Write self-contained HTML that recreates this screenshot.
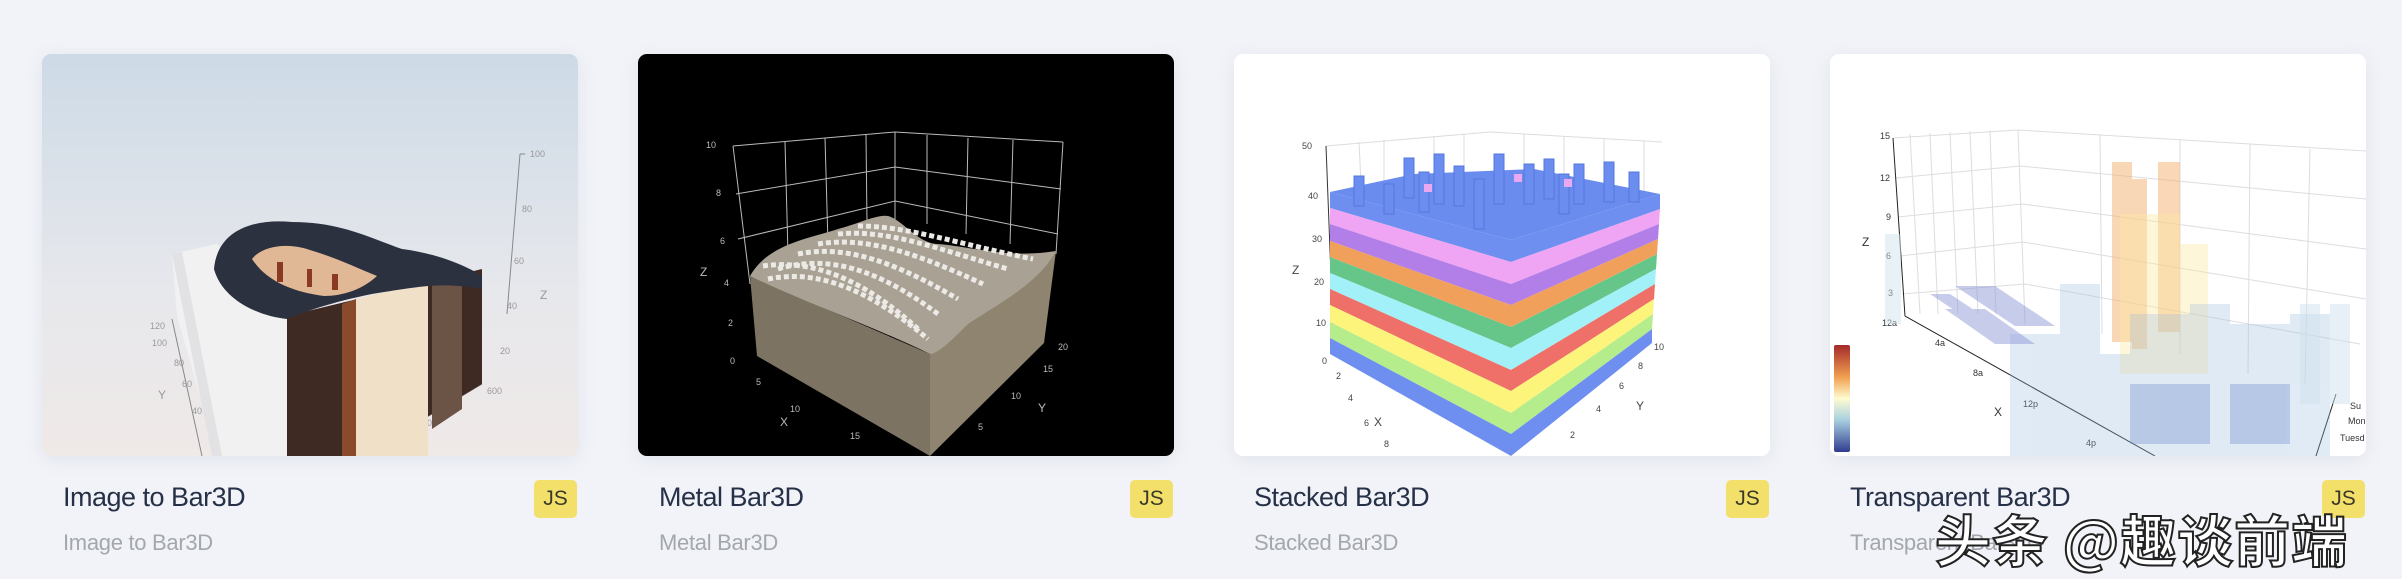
<!DOCTYPE html>
<html><head><meta charset="utf-8"><style>
*{margin:0;padding:0;box-sizing:border-box}
body{width:2402px;height:578px;background:#f1f3f8;position:relative;overflow:hidden;font-family:"Liberation Sans","Noto Sans CJK SC",sans-serif}
.card{position:absolute;top:54px;width:536px;height:402px;border-radius:9px;overflow:hidden;box-shadow:0 4px 18px rgba(120,130,160,.12)}
.card svg{display:block}
.t{position:absolute;top:482px;font-size:27px;color:#263147;letter-spacing:-0.5px}
.s{position:absolute;top:530px;font-size:22px;color:#a3a7ae;letter-spacing:-0.3px}
.js{position:absolute;top:480px;width:43px;height:38px;border-radius:5px;background:#f3e06a;color:#3b3a2a;font-size:21px;text-align:center;line-height:38px}
.wm{position:absolute;left:1935px;top:498px;font-size:56px;font-weight:bold;color:#fff;font-family:"Noto Sans CJK SC","WenQuanYi Zen Hei",sans-serif;-webkit-text-stroke:2px #222;letter-spacing:1px;white-space:nowrap}
</style></head><body>

<div class="card" style="left:42px;background:linear-gradient(#cddae6,#e7e8ec 60%,#efe9e7)">
<svg width="536" height="402" viewBox="0 0 536 402">
<g stroke="#888" stroke-width="1" fill="none"><path d="M465 260 L478 100 M478 100 L483 100"/><path d="M130 265 L160 402"/><path d="M440 330 L320 402"/></g>
<g font-size="9" fill="#999"><text x="488" y="103">100</text><text x="480" y="158">80</text><text x="472" y="210">60</text><text x="465" y="255">40</text><text x="458" y="300">20</text><text x="445" y="340">600</text><text x="108" y="275">120</text><text x="110" y="292">100</text><text x="132" y="312">80</text><text x="140" y="333">60</text><text x="150" y="360">40</text><text x="168" y="390">20</text><text x="395" y="355">80</text><text x="380" y="372">60</text><text x="370" y="393">40</text></g>
<text x="116" y="345" font-size="12" fill="#999">Y</text><text x="498" y="245" font-size="12" fill="#999">Z</text>
<polygon points="130,200 175,190 245,262 245,402 218,402 175,402 135,262" fill="#f2f1f1"/>
<polygon points="130,200 140,198 180,402 170,402" fill="#e2e2e4"/>
<polygon points="245,262 440,215 440,330 320,402 245,402" fill="#3e2a22"/>
<polygon points="314,245 386,228 386,402 314,402" fill="#f1e0c8"/>
<polygon points="300,250 314,245 314,402 300,402" fill="#8a4a2c"/>
<polygon points="390,228 420,220 420,355 390,375" fill="#6b5345"/>
<path d="M172,215 C175,180 205,164 250,168 C300,168 330,185 360,195 C400,200 430,215 440,222 L440,235 C400,228 380,232 330,240 C290,248 262,258 245,265 C215,262 180,245 172,215 Z" fill="#2c3140"/>
<path d="M210,205 C220,192 245,188 268,196 C295,204 315,214 335,222 C320,236 300,242 282,242 C252,238 225,228 210,205 Z" fill="#e0b896"/>
<path d="M235,208 l6,0 0,20 -6,0z M265,215 l5,0 0,18 -5,0z M290,220 l6,0 0,16 -6,0z" fill="#8a3a22"/>
</svg></div>
<div class="t" style="left:63px">Image to Bar3D</div><div class="s" style="left:63px">Image to Bar3D</div><div class="js" style="left:534px">JS</div>

<div class="card" style="left:638px;background:#000">
<svg width="536" height="402" viewBox="0 0 536 402">
<g stroke="#bbb" stroke-width="1" fill="none">
<path d="M95 92 L257 78 L425 88"/><path d="M98 140 L257 113 L423 135"/><path d="M100 185 L257 147 L420 180"/>
<path d="M95 92 L112 230"/><path d="M257 78 L257 170"/><path d="M425 88 L418 200"/>
<path d="M147 88 L150 200 M187 84 L190 190 M228 81 L229 170 M289 81 L289 170 M330 84 L328 180 M375 86 L372 190"/>
</g>
<g font-size="9" fill="#bbb"><text x="68" y="94">10</text><text x="78" y="142">8</text><text x="82" y="190">6</text><text x="86" y="232">4</text><text x="90" y="272">2</text><text x="92" y="310">0</text><text x="118" y="331">5</text><text x="152" y="358">10</text><text x="212" y="385">15</text><text x="420" y="296">20</text><text x="405" y="318">15</text><text x="373" y="345">10</text><text x="340" y="376">5</text></g>
<text x="62" y="222" font-size="12" fill="#bbb">Z</text><text x="142" y="372" font-size="12" fill="#bbb">X</text><text x="400" y="358" font-size="12" fill="#bbb">Y</text>
<polygon points="112,222 292,300 292,402 119,302" fill="#7c7362"/>
<polygon points="292,300 418,197 406,289 292,402" fill="#8e8470"/>
<path d="M112,222 C130,190 170,185 200,175 C225,168 240,160 250,162 C265,166 280,190 300,190 C330,192 370,205 418,197 C400,230 360,250 330,270 C315,285 300,300 292,300 C230,270 170,250 112,222 Z" fill="#a9a193"/>
<path d="M140,215 C190,200 240,215 300,260 M160,200 C210,190 260,210 320,245 M180,190 C230,182 280,200 345,230 M200,180 C250,175 300,195 370,215 M130,225 C180,215 230,235 290,285 M220,172 C270,172 320,190 395,205 M125,212 C175,205 225,225 280,275" stroke="#eceae6" stroke-width="5" stroke-dasharray="5 3" fill="none"/>
</svg></div>
<div class="t" style="left:659px">Metal Bar3D</div><div class="s" style="left:659px">Metal Bar3D</div><div class="js" style="left:1130px">JS</div>

<div class="card" style="left:1234px;background:#fff">
<svg width="536" height="402" viewBox="0 0 536 402">
<g stroke="#ddd" stroke-width="1" fill="none"><path d="M92 92 L256 78 L428 88"/><path d="M125 88 L128 150 M150 86 L150 140 M200 82 L200 140 M230 80 L230 140 M290 80 L290 140 M330 82 L330 140 M370 85 L370 140 M410 87 L410 140"/></g>
<path d="M92 92 L100 300" stroke="#333" stroke-width="1"/>
<g font-size="9" fill="#444"><text x="68" y="95">50</text><text x="74" y="145">40</text><text x="78" y="188">30</text><text x="80" y="231">20</text><text x="82" y="272">10</text><text x="88" y="310">0</text><text x="102" y="325">2</text><text x="114" y="347">4</text><text x="130" y="372">6</text><text x="150" y="393">8</text><text x="420" y="296">10</text><text x="404" y="315">8</text><text x="385" y="335">6</text><text x="362" y="358">4</text><text x="336" y="384">2</text></g>
<text x="58" y="220" font-size="12" fill="#444">Z</text><text x="140" y="372" font-size="12" fill="#444">X</text><text x="402" y="356" font-size="12" fill="#444">Y</text>
<polygon points="96,138 277,186 277,208 96,154" fill="#6e8ff0"/>
<polygon points="96,154 277,208 277,230 96,170" fill="#f0a4f4"/>
<polygon points="96,170 277,230 277,251 96,187" fill="#b27ee8"/>
<polygon points="96,187 277,251 277,273 96,203" fill="#f0a05a"/>
<polygon points="96,203 277,273 277,294 96,219" fill="#66c68a"/>
<polygon points="96,219 277,294 277,316 96,235" fill="#a2f0f8"/>
<polygon points="96,235 277,316 277,337 96,251" fill="#ee7068"/>
<polygon points="96,251 277,337 277,359 96,268" fill="#fdf47c"/>
<polygon points="96,268 277,359 277,380 96,284" fill="#b5ec8c"/>
<polygon points="96,284 277,380 277,402 96,300" fill="#6e8ff0"/>
<polygon points="277,186 426,140 426,155 277,208" fill="#6e8ff0"/>
<polygon points="277,208 426,155 425,170 277,230" fill="#f0a4f4"/>
<polygon points="277,230 425,170 424,185 277,251" fill="#b27ee8"/>
<polygon points="277,251 424,185 423,200 277,273" fill="#f0a05a"/>
<polygon points="277,273 423,200 422,215 277,294" fill="#66c68a"/>
<polygon points="277,294 422,215 421,230 277,316" fill="#a2f0f8"/>
<polygon points="277,316 421,230 420,245 277,337" fill="#ee7068"/>
<polygon points="277,337 420,245 419,260 277,359" fill="#fdf47c"/>
<polygon points="277,359 419,260 418,275 277,380" fill="#b5ec8c"/>
<polygon points="277,380 418,275 418,289 277,402" fill="#6e8ff0"/>
<polygon points="96,138 180,120 300,115 426,140 277,186" fill="#6a8cee"/>
<g fill="#6b8df0" stroke="#5577dd" stroke-width="1"><rect x="170" y="104" width="10" height="40"/><rect x="200" y="100" width="10" height="50"/><rect x="260" y="100" width="10" height="50"/><rect x="310" y="105" width="10" height="40"/><rect x="340" y="110" width="10" height="40"/><rect x="370" y="108" width="10" height="40"/><rect x="150" y="130" width="10" height="30"/><rect x="240" y="125" width="10" height="50"/><rect x="120" y="122" width="10" height="30"/><rect x="220" y="112" width="10" height="40"/><rect x="290" y="110" width="10" height="40"/><rect x="395" y="118" width="10" height="30"/><rect x="185" y="118" width="10" height="40"/><rect x="325" y="120" width="10" height="40"/></g>
<g fill="#e9a8f0"><rect x="190" y="130" width="8" height="8"/><rect x="280" y="120" width="8" height="8"/><rect x="330" y="125" width="8" height="8"/></g>
</svg></div>
<div class="t" style="left:1254px">Stacked Bar3D</div><div class="s" style="left:1254px">Stacked Bar3D</div><div class="js" style="left:1726px">JS</div>

<div class="card" style="left:1830px;background:#fff">
<svg width="536" height="402" viewBox="0 0 536 402">
<defs><linearGradient id="cb" x1="0" y1="0" x2="0" y2="1"><stop offset="0" stop-color="#a52a2a"/><stop offset=".3" stop-color="#f0a050"/><stop offset=".5" stop-color="#fffbd0"/><stop offset=".7" stop-color="#a8d0e0"/><stop offset="1" stop-color="#303c90"/></linearGradient></defs>
<g stroke="#ddd" stroke-width="1" fill="none">
<path d="M63 84 L188 76 L536 97"/><path d="M66 124 L190 112 L536 145"/><path d="M68 163 L192 150 L536 195"/><path d="M70 202 L193 188 L536 245"/><path d="M72 240 L195 230 L530 290"/>
<path d="M188 76 L195 270 M270 80 L272 280 M350 85 L350 300 M420 90 L418 320 M480 95 L475 330"/>
<path d="M80 80 L90 260 M100 79 L108 260 M120 78 L128 260 M140 77 L148 260 M160 76 L166 260"/>
</g>
<path d="M63 84 L75 262 L325 402 M506 340 L486 402" stroke="#222" fill="none"/>
<g font-size="9" fill="#333"><text x="50" y="85">15</text><text x="50" y="127">12</text><text x="56" y="166">9</text><text x="56" y="205">6</text><text x="58" y="242">3</text><text x="52" y="272">12a</text><text x="105" y="292">4a</text><text x="143" y="322">8a</text><text x="193" y="353">12p</text><text x="256" y="392">4p</text><text x="520" y="355">Su</text><text x="518" y="370">Mon</text><text x="510" y="387">Tuesd</text></g>
<text x="32" y="192" font-size="12" fill="#333">Z</text><text x="164" y="362" font-size="12" fill="#333">X</text>
<rect x="4" y="291" width="16" height="107" rx="2" fill="url(#cb)"/>
<g fill="#f3b070" opacity=".5"><rect x="282" y="108" width="20" height="180"/><rect x="328" y="108" width="22" height="170"/><rect x="302" y="125" width="15" height="170"/></g>
<g fill="#fde9a0" opacity=".4"><rect x="290" y="160" width="60" height="160"/><rect x="350" y="190" width="28" height="130"/></g>
<g fill="#9cbde0" opacity=".3"><rect x="230" y="230" width="40" height="172"/><rect x="300" y="260" width="60" height="142"/><rect x="360" y="250" width="40" height="152"/><rect x="400" y="270" width="60" height="132"/><rect x="460" y="260" width="40" height="142"/><rect x="260" y="300" width="80" height="102"/><rect x="180" y="280" width="50" height="122"/></g>
<g fill="#cfe3ee" opacity=".5"><rect x="55" y="180" width="16" height="90"/><rect x="470" y="250" width="20" height="100"/><rect x="500" y="250" width="20" height="100"/></g>
<g fill="#8f99d8" opacity=".5"><path d="M125 232 l40 0 60 40 -40 0z M115 255 l40 0 50 35 -40 0z M100 240 l20 0 30 20 -20 0z"/></g>
<g fill="#6a8cc8" opacity=".35"><rect x="300" y="330" width="80" height="60"/><rect x="400" y="330" width="60" height="60"/></g>
</svg></div>
<div class="t" style="left:1850px">Transparent Bar3D</div><div class="s" style="left:1850px">Transparent Bar3D</div><div class="js" style="left:2322px">JS</div>

<div class="wm">头条 @趣谈前端</div>
</body></html>
